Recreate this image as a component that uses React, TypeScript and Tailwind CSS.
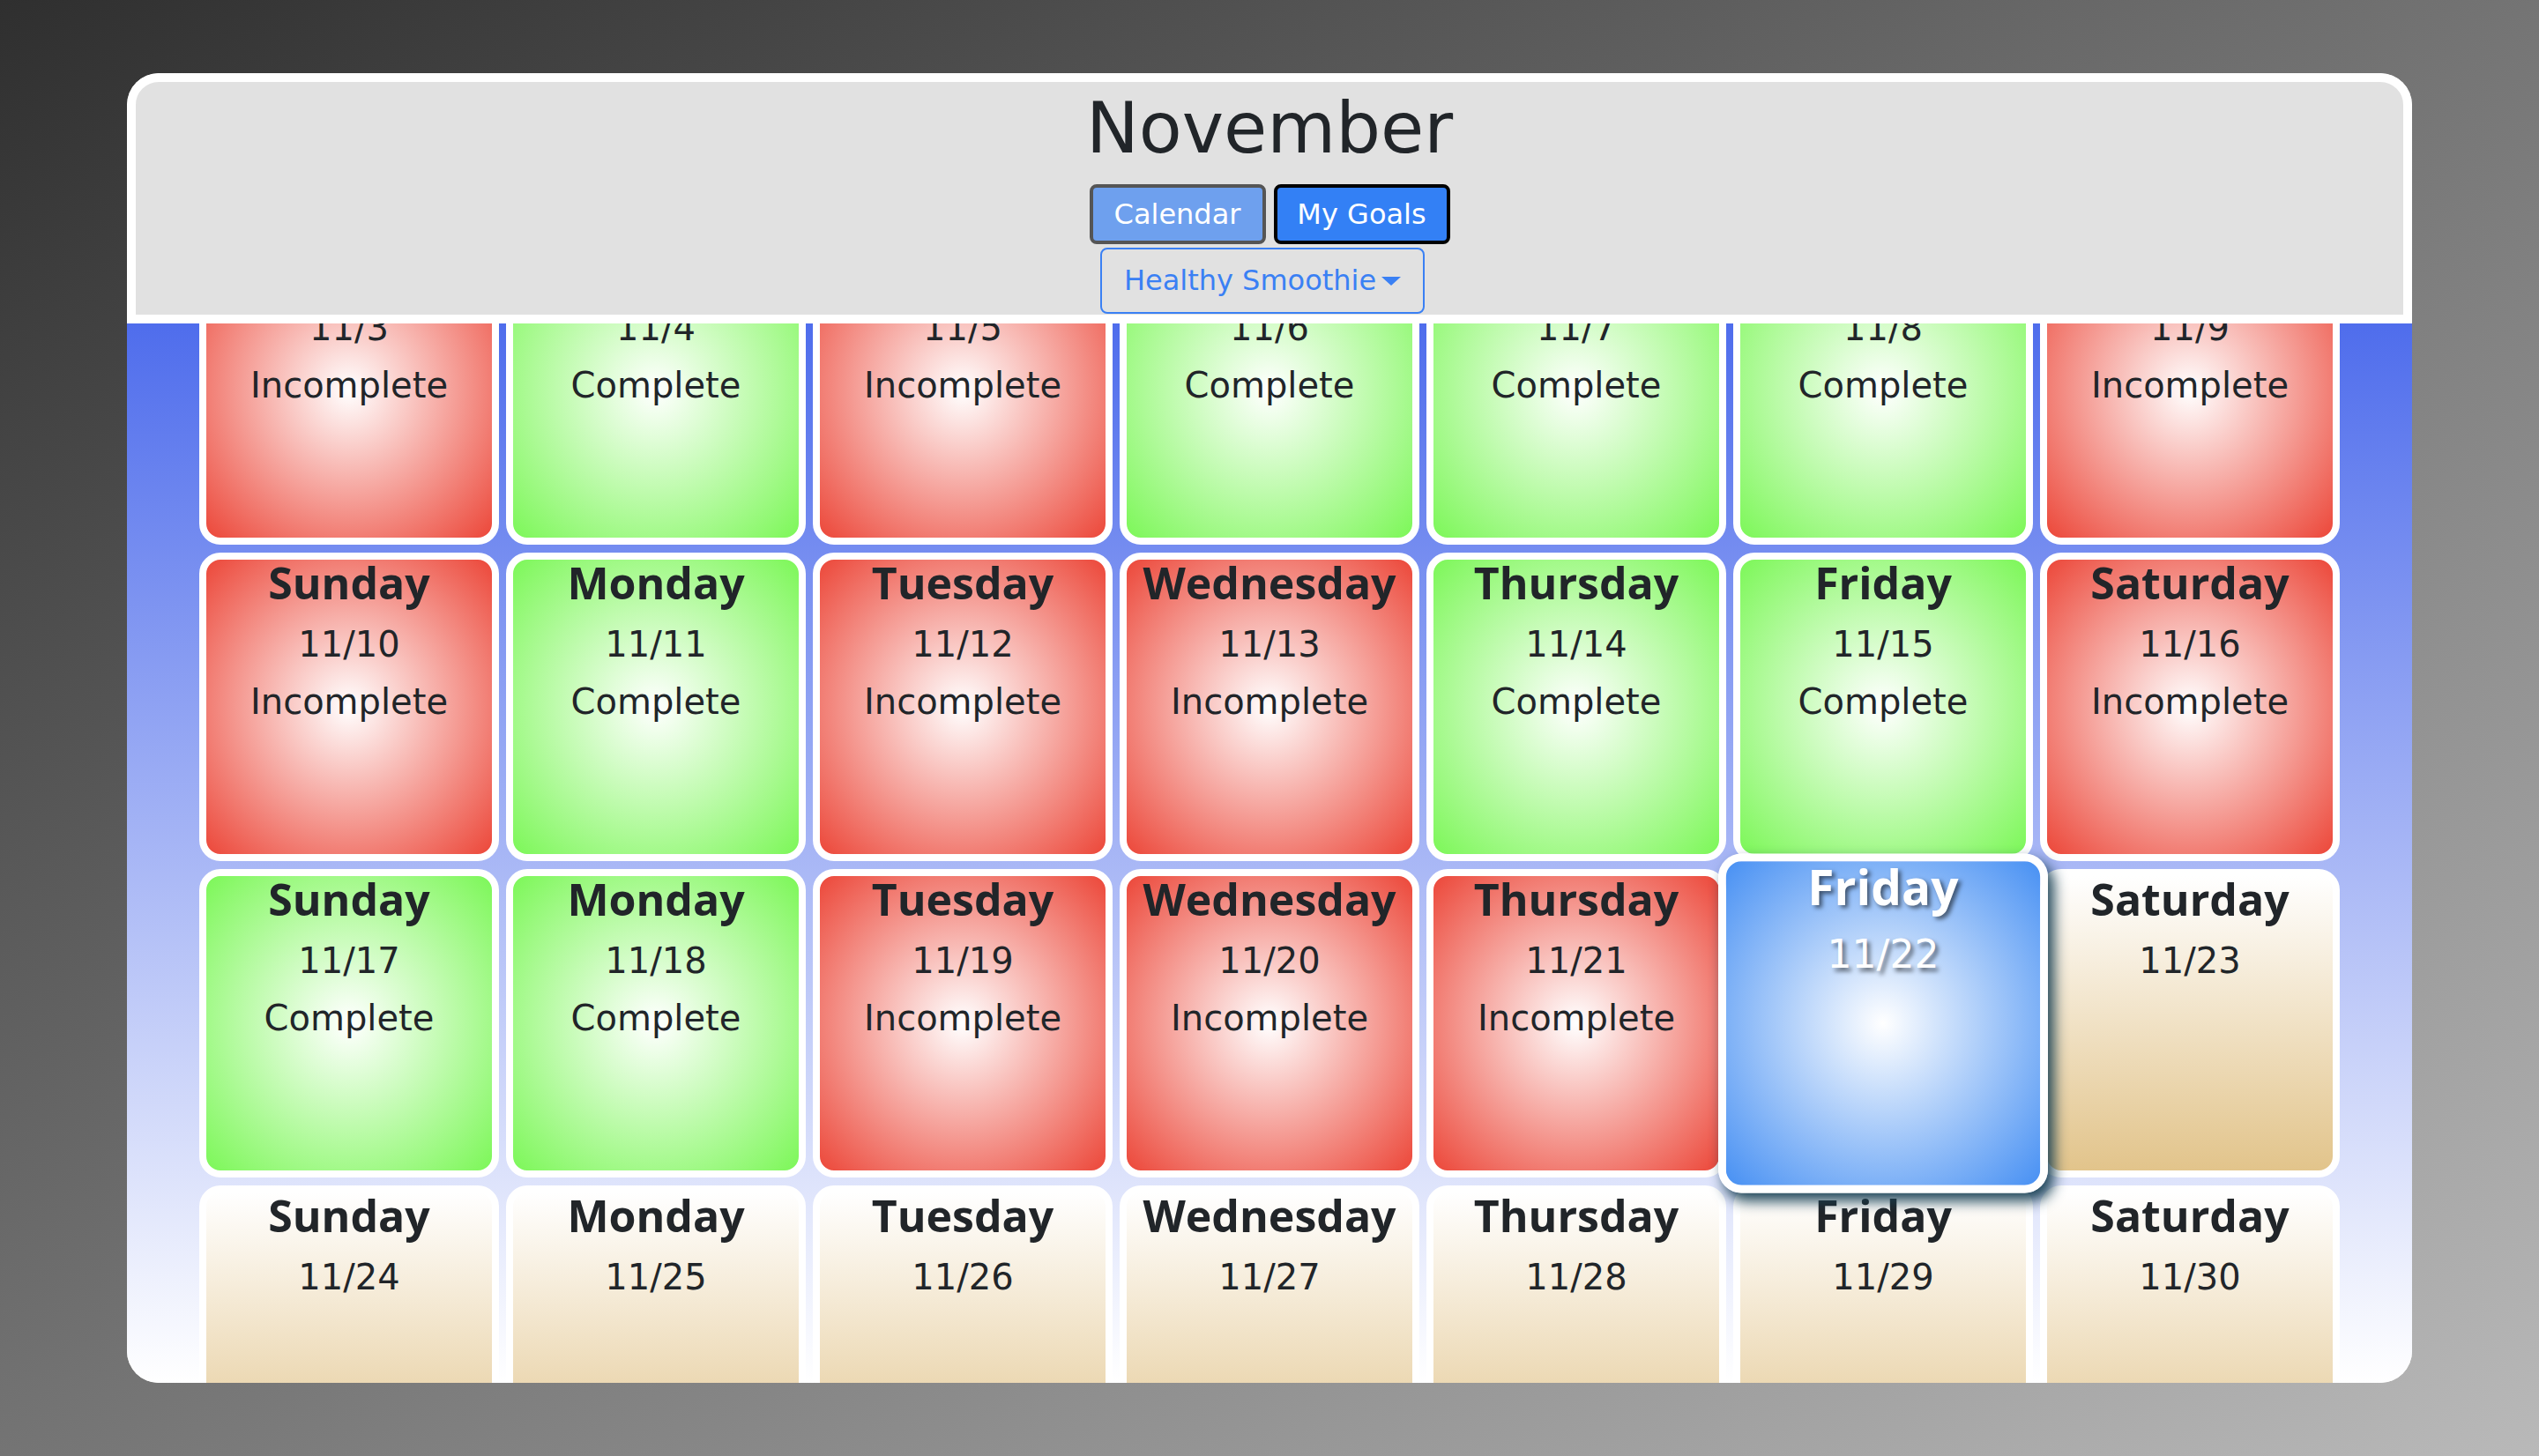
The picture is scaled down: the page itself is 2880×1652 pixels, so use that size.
import React from "react";

type Status = "complete" | "incomplete" | "today" | "future";

type Cell = { day: string; date: string; status: Status } | null;

const DAYS = ["Sunday", "Monday", "Tuesday", "Wednesday", "Thursday", "Friday", "Saturday"];

// progress for November, by date
const PROGRESS: Record<number, Status> = {
  1: "complete",
  2: "incomplete",
  3: "incomplete",
  4: "complete",
  5: "incomplete",
  6: "complete",
  7: "complete",
  8: "complete",
  9: "incomplete",
  10: "incomplete",
  11: "complete",
  12: "incomplete",
  13: "incomplete",
  14: "complete",
  15: "complete",
  16: "incomplete",
  17: "complete",
  18: "complete",
  19: "incomplete",
  20: "incomplete",
  21: "incomplete",
  22: "today",
};

const FIRST_WEEKDAY = 5; // Nov 1 is a Friday

function buildCells(): Cell[] {
  const cells: Cell[] = [];
  for (let i = 0; i < FIRST_WEEKDAY; i++) cells.push(null);
  for (let d = 1; d <= 30; d++) {
    cells.push({
      day: DAYS[(FIRST_WEEKDAY + d - 1) % 7],
      date: `11/${d}`,
      status: PROGRESS[d] ?? "future",
    });
  }
  return cells;
}

const BG: Record<Status, string> = {
  complete: "bg-[radial-gradient(#ffffff,#7cf758)]",
  incomplete: "bg-[radial-gradient(#ffffff,#ec4739)]",
  today: "bg-[radial-gradient(#ffffff,#4790f3)]",
  future: "bg-[linear-gradient(#ffffff,#e2c48b)]",
};

const regular = "font-['DejaVu_Sans',sans-serif]";
const bold = "font-['Open_Sans',sans-serif] font-bold";

function DayCard({ cell }: { cell: Cell }) {
  if (!cell) return <div className="h-[350px]" />;

  const isToday = cell.status === "today";
  const textColor = isToday
    ? "text-white [text-shadow:3px_3px_5px_rgba(0,0,0,0.55)]"
    : "text-[#212529]";

  return (
    <div
      className={`h-[350px] rounded-[24px] border-[8px] border-white text-center ${BG[cell.status]} ${textColor} ${
        isToday ? "relative z-10 scale-110 shadow-[6px_8px_14px_rgba(22,62,82,0.95)]" : ""
      }`}
    >
      <div className={`${bold} text-[50px] leading-[52px]`}>{cell.day}</div>
      <div className={`${regular} mt-[12px] text-[40px] leading-[65px]`}>{cell.date}</div>
      {(cell.status === "complete" || cell.status === "incomplete") && (
        <div className={`${regular} text-[40px] leading-[65px]`}>
          {cell.status === "complete" ? "Complete" : "Incomplete"}
        </div>
      )}
    </div>
  );
}

export default function App() {
  const cells = buildCells();

  return (
    <div className="flex h-screen items-center justify-center bg-[linear-gradient(to_bottom_right,#2f2f2f,#b9b9b9)]">
      <div className="flex h-[90vh] w-[90%] flex-col overflow-hidden rounded-[36px] bg-white">
        {/* Header */}
        <header className="flex h-[284px] shrink-0 flex-col items-center rounded-t-[36px] border-[10px] border-white bg-[#e1e1e1]">
          <h1 className={`${regular} mb-[10px] text-[80px] leading-[106px] text-[#212529]`}>November</h1>
          <div className="flex gap-[9px]">
            <button className={`${regular} h-[68px] w-[200px] rounded-[8px] border-[4px] border-[#555555] bg-[#6ea0ee] text-[32px] text-white`}>
              Calendar
            </button>
            <button className={`${regular} h-[68px] w-[200px] rounded-[8px] border-[4px] border-black bg-[#3380f5] text-[32px] text-white`}>
              My Goals
            </button>
          </div>
          <button
            className={`${regular} mt-[4px] mr-[16px] flex h-[75px] w-[368px] items-center justify-center gap-[6px] rounded-[8px] border-2 border-[#3a80f4] text-[32px] text-[#3a80f4]`}
          >
            Healthy Smoothie
            <span className="mt-[2px] h-0 w-0 border-x-[11px] border-t-[10px] border-x-transparent border-t-[#3a80f4]" />
          </button>
        </header>

        {/* Scrolled month grid */}
        <div
          className="min-h-0 flex-1 overflow-hidden bg-[linear-gradient(#4f6dec,#ffffff)]"
          ref={(el) => {
            if (el) el.scrollTop = 458;
          }}
        >
          <div className="grid grid-cols-7 gap-x-[8px] gap-y-[9px] px-[82px]">
            {cells.map((cell, i) => (
              <DayCard key={i} cell={cell} />
            ))}
          </div>
        </div>
      </div>
    </div>
  );
}
